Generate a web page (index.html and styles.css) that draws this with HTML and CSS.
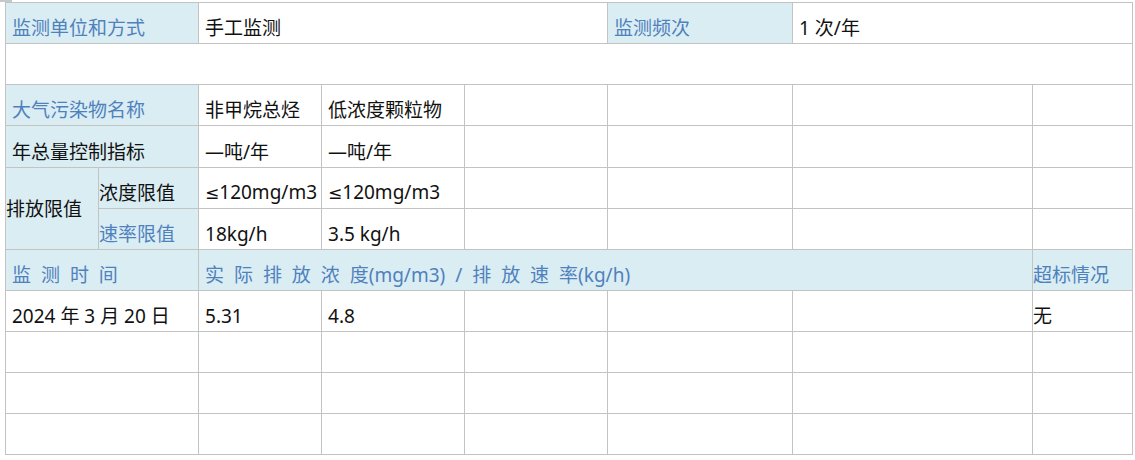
FILE: index.html
```html
<!DOCTYPE html>
<html lang="zh-CN">
<head>
<meta charset="utf-8">
<link rel="stylesheet" href="styles.css">
</head>
<body>
<div class="sheet">
  <span class="mark-tl"></span>
  <table class="grid">
    <colgroup>
      <col class="c1"><col class="c2"><col class="c3"><col class="c4"><col class="c5"><col class="c6"><col class="c7"><col class="c8">
    </colgroup>
    <tr>
      <td colspan="2" class="hd blue">监测单位和方式</td>
      <td colspan="3" class="pad">手工监测</td>
      <td class="hd blue">监测频次</td>
      <td colspan="2" class="pad">1 次/年</td>
    </tr>
    <tr>
      <td colspan="8"></td>
    </tr>
    <tr>
      <td colspan="2" class="hd blue">大气污染物名称</td>
      <td class="pad">非甲烷总烃</td>
      <td class="pad">低浓度颗粒物</td>
      <td></td><td></td><td></td><td></td>
    </tr>
    <tr class="r42">
      <td colspan="2" class="hd">年总量控制指标</td>
      <td class="pad">—吨/年</td>
      <td class="pad">—吨/年</td>
      <td></td><td></td><td></td><td></td>
    </tr>
    <tr>
      <td rowspan="2" class="hd mid nopad">排放限值</td>
      <td class="hd nopad">浓度限值</td>
      <td class="pad"><span class="sym">≤</span>120mg/m3</td>
      <td class="pad"><span class="sym">≤</span>120mg/m3</td>
      <td></td><td></td><td></td><td></td>
    </tr>
    <tr>
      <td class="hd blue nopad">速率限值</td>
      <td class="pad">18kg/h</td>
      <td class="pad">3.5 kg/h</td>
      <td></td><td></td><td></td><td></td>
    </tr>
    <tr>
      <td colspan="2" class="hd blue spaced">监 测 时 间</td>
      <td colspan="5" class="hd blue spaced">实 际 排 放 浓 度(mg/m3) / 排 放 速 率(kg/h)</td>
      <td class="hd blue nopad">超标情况</td>
    </tr>
    <tr>
      <td colspan="2" class="pad">2024 年 3 月 20 日</td>
      <td class="pad">5.31</td>
      <td class="pad">4.8</td>
      <td></td><td></td><td></td>
      <td class="nopad">无</td>
    </tr>
    <tr>
      <td colspan="2"></td><td></td><td></td><td></td><td></td><td></td><td></td>
    </tr>
    <tr>
      <td colspan="2"></td><td></td><td></td><td></td><td></td><td></td><td></td>
    </tr>
    <tr>
      <td colspan="2"></td><td></td><td></td><td></td><td></td><td></td><td></td>
    </tr>
  </table>
  <span class="mark-br"></span>
</div>
</body>
</html>
```

FILE: styles.css
```css
html, body {
  margin: 0;
  padding: 0;
  background: #ffffff;
}

body {
  font-family: "Noto Sans", "Noto Sans CJK SC", sans-serif;
  font-size: 19px;
  color: #111111;
}

.sheet {
  position: relative;
  padding: 2px 0 0 5px;
}

.grid {
  border-collapse: collapse;
  table-layout: fixed;
  width: 1128px;
}

.c1 { width: 93px; }
.c2 { width: 100px; }
.c3 { width: 123px; }
.c4 { width: 143px; }
.c5 { width: 143px; }
.c6 { width: 185px; }
.c7 { width: 240px; }
.c8 { width: 100px; }

.grid tr {
  height: 41px;
}

.grid tr.r42 {
  height: 42px;
}

.grid td {
  border: 1px solid #c3c3c3;
  padding: 0 0 3px 6px;
  vertical-align: bottom;
  line-height: 24px;
  white-space: nowrap;
  overflow: hidden;
}

.grid td.nopad {
  padding-left: 0;
}

.grid td.hd {
  background: #daedf3;
}

.grid td.blue {
  color: #4f81bd;
}

.grid td.mid {
  vertical-align: middle;
  padding-bottom: 0;
}

.grid td.spaced {
  word-spacing: 5px;
}

.sym {
  font-family: "DejaVu Sans", "Liberation Sans", sans-serif;
  font-size: 17px;
}

.mark-tl {
  position: absolute;
  left: 0;
  top: 0;
  width: 12px;
  height: 2px;
  background: #c8c8c8;
}

.mark-br {
  position: absolute;
  left: 1133px;
  top: 455px;
  width: 2px;
  height: 5px;
  border-left: 1px solid #b0b0b0;
  border-top: 1px solid #b0b0b0;
}
```
